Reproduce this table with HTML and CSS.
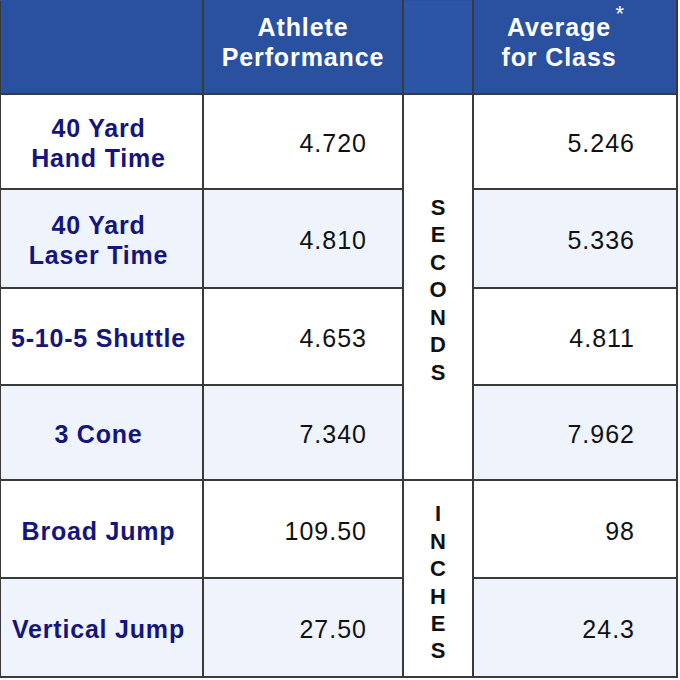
FILE: index.html
```html
<!DOCTYPE html>
<html lang="en">
<head>
<meta charset="utf-8">
<title>Combine Results</title>
<link rel="stylesheet" href="styles.css">
</head>
<body>
<table class="stats">
  <colgroup>
    <col class="c-label">
    <col class="c-val">
    <col class="c-unit">
    <col class="c-avg">
  </colgroup>
  <thead>
    <tr class="head">
      <th class="h-blank"></th>
      <th class="h-perf">Athlete<br>Performance</th>
      <th class="h-unit"></th>
      <th class="h-avg"><span class="avg-word">Average<span class="star">*</span></span><br>for Class</th>
    </tr>
  </thead>
  <tbody>
    <tr class="row r1">
      <td class="label">40 Yard<br>Hand Time</td>
      <td class="num">4.720</td>
      <td class="unit" rowspan="4">
        <div class="letters"><span>S</span><span>E</span><span>C</span><span>O</span><span>N</span><span>D</span><span>S</span></div>
      </td>
      <td class="num avg">5.246</td>
    </tr>
    <tr class="row r2 alt">
      <td class="label">40 Yard<br>Laser Time</td>
      <td class="num">4.810</td>
      <td class="num avg">5.336</td>
    </tr>
    <tr class="row r3">
      <td class="label">5-10-5 Shuttle</td>
      <td class="num">4.653</td>
      <td class="num avg">4.811</td>
    </tr>
    <tr class="row r4 alt">
      <td class="label">3 Cone</td>
      <td class="num">7.340</td>
      <td class="num avg">7.962</td>
    </tr>
    <tr class="row r5">
      <td class="label">Broad Jump</td>
      <td class="num">109.50</td>
      <td class="unit" rowspan="2">
        <div class="letters inches"><span>I</span><span>N</span><span>C</span><span>H</span><span>E</span><span>S</span></div>
      </td>
      <td class="num avg">98</td>
    </tr>
    <tr class="row r6 alt">
      <td class="label">Vertical Jump</td>
      <td class="num">27.50</td>
      <td class="num avg">24.3</td>
    </tr>
  </tbody>
</table>
</body>
</html>
```

FILE: styles.css
```css
html, body {
  margin: 0;
  padding: 0;
  background: #ffffff;
}

body {
  font-family: "Liberation Sans", Arial, sans-serif;
  width: 680px;
  height: 680px;
  overflow: hidden;
}

.stats {
  border-collapse: collapse;
  table-layout: fixed;
  width: 677px;
  margin-left: -1px;
  margin-top: -1px;
}

.c-label { width: 203px; }
.c-val { width: 200px; }
.c-unit { width: 70px; }
.c-avg { width: 204px; }

.stats th,
.stats td {
  border: 2px solid #3a3a3a;
  padding: 0;
  box-sizing: border-box;
}

.head th {
  height: 94px;
  background: #2a519f;
  color: #ffffff;
  font-weight: bold;
  font-size: 25px;
  letter-spacing: 0.9px;
  line-height: 30px;
  text-align: center;
  vertical-align: middle;
  padding-bottom: 11px;
  border-top-color: #2a519f;
}

.head .h-unit {
  background: #2c55a6;
}

.head .h-avg {
  padding-right: 32px;
}

.avg-word {
  position: relative;
}

.star {
  position: absolute;
  right: -13px;
  top: -14px;
  font-size: 22px;
  font-weight: normal;
  letter-spacing: 0;
}

.row td {
  background: #ffffff;
}

.row.alt td {
  background: #eef3fc;
}

.row td.unit {
  background: #ffffff;
}

.r1 td { height: 95px; }
.r2 td { height: 99px; }
.r3 td { height: 97px; }
.r4 td { height: 95px; }
.r5 td { height: 98px; }
.r6 td { height: 99px; }

.label {
  color: #15157a;
  font-weight: bold;
  font-size: 25px;
  letter-spacing: 0.8px;
  line-height: 30px;
  text-align: center;
  vertical-align: middle;
  padding-top: 3px !important;
  padding-right: 6px !important;
}

.num {
  color: #111111;
  font-size: 25px;
  letter-spacing: 1px;
  line-height: 30px;
  text-align: right;
  vertical-align: middle;
  padding-top: 3px !important;
  padding-right: 35px !important;
}

.num.avg {
  padding-right: 41px !important;
}

.unit {
  vertical-align: middle;
  text-align: center;
}

.letters {
  display: flex;
  flex-direction: column;
  align-items: center;
  font-weight: bold;
  font-size: 22px;
  line-height: 27.4px;
  color: #111111;
  padding-top: 6px;
}

.letters.inches {
  padding-top: 8px;
}
```
